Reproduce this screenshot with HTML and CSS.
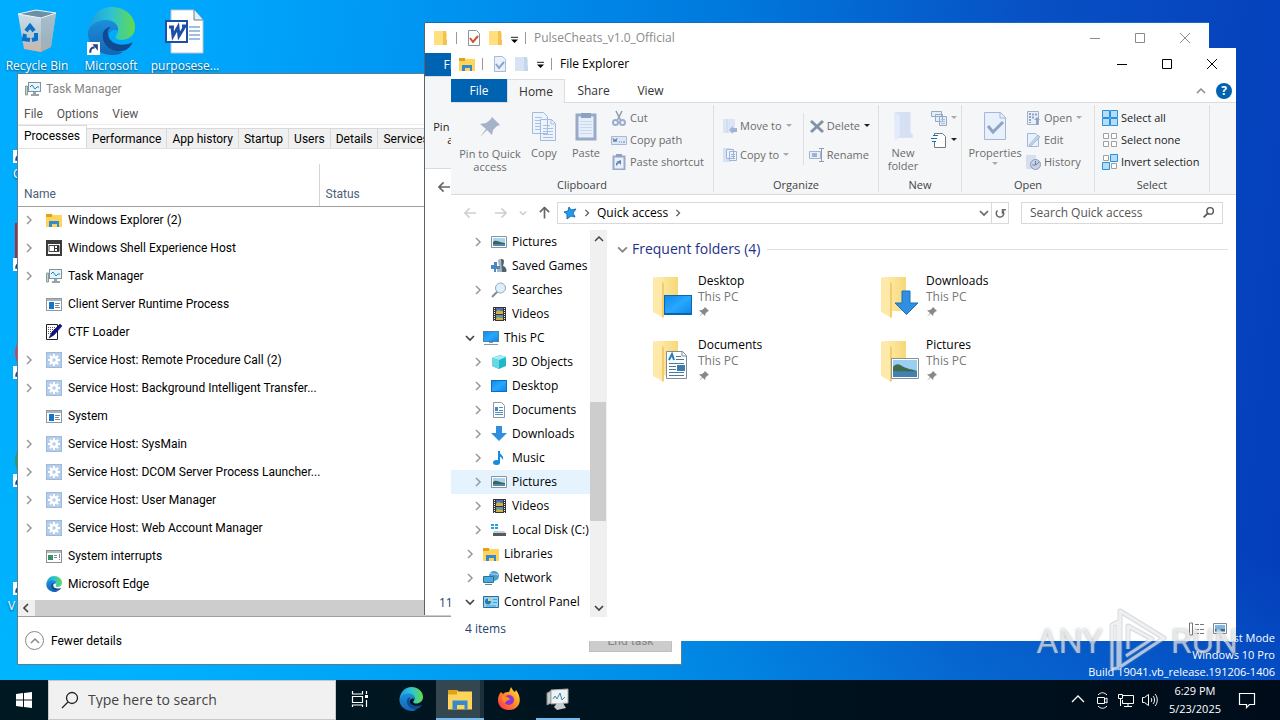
FILE: index.html
```html
<!DOCTYPE html>
<html lang="en">
<head>
<meta charset="utf-8">
<title>Desktop</title>
<link rel="stylesheet" href="styles.css">
</head>
<body>
<svg class="defs" aria-hidden="true">
  <defs>
    <linearGradient id="gEdgeA" x1="0" y1="0" x2="1" y2="0"><stop offset="0" stop-color="#1b9de2"/><stop offset=".5" stop-color="#2fc3d0"/><stop offset="1" stop-color="#62dc4a"/></linearGradient>
    <linearGradient id="gEdgeB" x1="0" y1="0" x2="0" y2="1"><stop offset="0" stop-color="#1b8fdc"/><stop offset="1" stop-color="#1466b4"/></linearGradient>
    <linearGradient id="gBin" x1="0" y1="0" x2="0" y2="1"><stop offset="0" stop-color="#cfdfea"/><stop offset=".7" stop-color="#b3c3ce"/><stop offset="1" stop-color="#d9b49c"/></linearGradient>
    <linearGradient id="gFold" x1="0" y1="0" x2="1" y2="0"><stop offset="0" stop-color="#ffeeb4"/><stop offset="1" stop-color="#f7d877"/></linearGradient>
    <linearGradient id="gScreen" x1="0" y1="0" x2="1" y2="1"><stop offset="0" stop-color="#1287e8"/><stop offset=".5" stop-color="#28a8ff"/><stop offset="1" stop-color="#0d86e8"/></linearGradient>
    <linearGradient id="gFox" x1="1" y1="0" x2="0" y2="1"><stop offset="0" stop-color="#fff34d"/><stop offset=".4" stop-color="#ff9a1f"/><stop offset="1" stop-color="#ff2a55"/></linearGradient>
  </defs>
  <symbol id="edge" viewBox="0 0 48 48">
    <path d="M1 25C2 10 12 0 25 0c13 0 23 9 23 20 0 8-6 13-14 13-5 0-7-3-4-6 3-5 0-12-8-12-9 0-17 4-21 10z" fill="url(#gEdgeA)"/>
    <path d="M1 25c2-8 10-12 18-12 8 0 13 5 12 11-4-3-10 0-10 7 0 9 8 14 15 14-4 3-8 3-12 3C10 47 0 36 1 25z" fill="url(#gEdgeB)"/>
    <path d="M16 26c-2 10 7 20 20 18 4-1 7-4 9-7 1-1 0-2-1-1-10 4-22 1-23-9-1-3 1-6 3-7-4 0-7 3-8 6z" fill="#0f4a92"/>
  </symbol>
  <symbol id="bin" viewBox="0 0 48 48">
    <path d="M5 7l38-1-5 34-10 5-17-3z" fill="url(#gBin)"/>
    <path d="M28 10l15-4-5 34-10 5z" fill="#90a8b6" opacity=".6"/>
    <path d="M5 7l18-4 20 3-15 5z" fill="#6d8fa5" stroke="#edf5fa"/>
    <path d="M13 24l4-5 4 5M23 26v6l-4 1M17 33l-6-1 1-5" fill="none" stroke="#0971c9" stroke-width="4"/>
  </symbol>
  <symbol id="word" viewBox="0 0 40 48">
    <path d="M6 3h23l9 10v33H6z" fill="#fff" stroke="#b9c6cf"/><path d="M29 3v10h9" fill="#e9eef2" stroke="#5c7c94"/>
    <path d="M24 20h11M24 24h11M24 28h11M24 32h11" stroke="#3e80c8"/><rect x="1" y="14" width="21" height="21" fill="#fff" stroke="#1d4fa8" stroke-width="2"/>
    <path d="M4 20h5M7 20l1 9 5-9 1 9 6-10M17 19h4" fill="none" stroke="#1d4fa8" stroke-width="3"/>
  </symbol>
  <symbol id="link" viewBox="0 0 12 12"><path d="M0 0h12v12H0z" fill="#fff"/><path d="M3 10c0-4 1-5 4-5" fill="none" stroke="#1c4389" stroke-width="2"/><path d="M5 2h5v6z" fill="#1c4389"/></symbol>
  <symbol id="exp" viewBox="0 0 16 16"><path d="M0 2h6l1 1h9v12H0z" fill="#ffd45a"/><path d="M0 2h6v3H0z" fill="#e0a11b"/><path d="M3 9h10v6h-2v-3H6v3H3z" fill="#3489cf"/></symbol>
  <symbol id="shell" viewBox="0 0 16 16"><path d="M1 1h14v14H1z" fill="#fff" stroke="#3b3b3b" stroke-width="2"/><path d="M2 2h12v2H2z" fill="#3b3b3b"/><path d="M3 5.500h10v6H3z" fill="none" stroke="#444"/><path d="M8 6h1v5H8zM9 8h3v1H9zM11 6h2v5h-2z" fill="#333"/></symbol>
  <symbol id="tm" viewBox="0 0 16 16"><path d="M.5 5h2v9h-2z" fill="#b9dcc0" stroke="#8d9a9a"/><rect x="3.500" y="1.500" width="12" height="9" fill="#e2f5fd" stroke="#85919b"/><path d="M5 6l2-2 3 4 2-2h2" fill="none" stroke="#2685b8"/><path d="M8 11h3v2h3v2H6v-2h2z" fill="#9aa3a8"/></symbol>
  <symbol id="app" viewBox="0 0 16 16"><rect x=".5" y="2.500" width="15" height="12" fill="#fff" stroke="#8b99a5"/><path d="M1 3h14v2H1z" fill="#a9b6c0"/><path d="M3 6h5v7H3z" fill="#1774c4"/><path d="M9 7.500h5M9 9.500h4M9 11.500h5" stroke="#74899b"/></symbol>
  <symbol id="ctf" viewBox="0 0 16 16"><path d="M.5.500h11v15H.5z" fill="#fff" stroke="#222"/><path d="M2 3.500h8M2 5.500h7M2 7.500h6M2 9.500h4" stroke="#555" stroke-dasharray="1 1"/><path d="M3 14l3-6 8-8 2 2-8 9z" fill="#10109a" stroke="#000" stroke-width=".5"/></symbol>
  <symbol id="gear" viewBox="0 0 16 16"><rect x=".5" y=".5" width="15" height="15" fill="#b3cdea" stroke="#9dbbde"/><circle cx="8" cy="8" r="3" fill="none" stroke="#fff" stroke-width="2.500"/><path d="M8 2v2M8 12v2M2 8h2M12 8h2M3.800 3.800l1.500 1.500M10.700 10.700l1.500 1.500M12.200 3.800l-1.500 1.500M5.300 10.700l-1.500 1.500" stroke="#fff" stroke-width="2"/></symbol>
  <symbol id="sysint" viewBox="0 0 16 16"><rect x=".5" y="2.500" width="15" height="12" fill="#fff" stroke="#8b8f92"/><path d="M1 3h14v2H1z" fill="#b5babd"/><path d="M2 7h5v5H2z" fill="#3a8f6c"/><path d="M8 7.500h3M8 9.500h3M13.500 6v4M13.500 11v1" stroke="#789"/></symbol>
  <symbol id="r" viewBox="0 0 10 10"><path d="M3 1l4 4-4 4" fill="none" stroke="currentColor" stroke-width="1.500"/></symbol>
  <symbol id="d" viewBox="0 0 10 10"><path d="M1 3l4 4 4-4" fill="none" stroke="currentColor" stroke-width="1.700"/></symbol>
  <symbol id="u" viewBox="0 0 10 10"><path d="M1 7l4-4 4 4" fill="none" stroke="currentColor" stroke-width="1.500"/></symbol>
  <symbol id="l" viewBox="0 0 10 10"><path d="M7 1L3 5l4 4" fill="none" stroke="currentColor" stroke-width="1.700"/></symbol>
  <symbol id="tri" viewBox="0 0 6 6"><path d="M0 1h6L3 4z" fill="currentColor"/></symbol>
  <symbol id="qat" viewBox="0 0 8 8"><path d="M0 1.500h8" stroke="currentColor"/><path d="M0 4h8L4 8z" fill="currentColor"/></symbol>
  <symbol id="min" viewBox="0 0 12 12"><path d="M1 6.500h10" stroke="currentColor"/></symbol>
  <symbol id="max" viewBox="0 0 12 12"><path d="M1.500 1.500h9v9h-9z" fill="none" stroke="currentColor"/></symbol>
  <symbol id="x" viewBox="0 0 12 12"><path d="M1 1l10 10M11 1L1 11" stroke="currentColor"/></symbol>
  <symbol id="fold" viewBox="0 0 16 16"><path d="M1 1h9l4 2v12H1z" fill="#ffdf7e"/><path d="M10 1h3v9h1v5h-4z" fill="#f1c451"/></symbol>
  <symbol id="foldg" viewBox="0 0 16 16"><path d="M1 1h9l4 2v12H1z" fill="#d8e3f5"/><path d="M10 1h3v9h1v5h-4z" fill="#c6d5ec"/></symbol>
  <symbol id="chk" viewBox="0 0 16 16"><path d="M2.500.500h8l3 3v12h-11z" fill="#fff" stroke="#8994a2"/><path d="M4 8l3 4 5-6" fill="none" stroke="#cf5425" stroke-width="2"/></symbol>
  <symbol id="chkg" viewBox="0 0 16 16"><path d="M2.500.500h8l3 3v12h-11z" fill="#e9f1fc" stroke="#a8bbd6"/><path d="M4 8l3 4 5-6" fill="none" stroke="#8ba4ca" stroke-width="2"/></symbol>
  <symbol id="pin" viewBox="0 0 24 24"><path d="M14 2l8 8-3 1-4 4-1 5-5-5-7 7 6-8-6-5 6-1 4-3z" fill="currentColor"/></symbol>
  <symbol id="copy" viewBox="0 0 26 30"><path d="M1.500 1.500h11l4 4v17h-15zM9.500 8.500h11l4 4v17h-15z" fill="#edf4fd" stroke="#a5b9da"/><path d="M20 8v5h5M4 6.500h7M4 9.500h5M4 12.500h5M4 15.500h5M4 18.500h5M12 14.500h7M12 17.500h10M12 20.500h10M12 23.500h10M12 26.500h10" fill="none" stroke="#a9bfdf"/></symbol>
  <symbol id="paste" viewBox="0 0 22 30"><path d="M2 4h18v24H2z" fill="#e7effb" stroke="#98aac8" stroke-width="3"/><path d="M6 2h10v5H6z" fill="#8ea1c1"/><path d="M5 10.500h12M5 13.500h12M5 16.500h12M5 19.500h12M5 22.500h12" stroke="#cad7ee"/></symbol>
  <symbol id="cut" viewBox="0 0 16 16"><path d="M5 1l5 10M11 1L6 11" stroke="#8f9bb0" stroke-width="1.500"/><circle cx="4.500" cy="12.500" r="2.500" fill="none" stroke="#9baece" stroke-width="2"/><circle cx="11.500" cy="12.500" r="2.500" fill="none" stroke="#9baece" stroke-width="2"/></symbol>
  <symbol id="cpath" viewBox="0 0 16 16"><path d="M.5 4.500h15v8H.5z" fill="#dce7f8" stroke="#a9b9d4"/><path d="M2 6l1 4 1-3 1 3 1-4M8 10h1M10 10h1M12 10h2" fill="none" stroke="#7085ac"/></symbol>
  <symbol id="pshort" viewBox="0 0 16 16"><path d="M2.500 2.500h11v13h-11z" fill="#e8f0fc" stroke="#98aac8" stroke-width="2"/><path d="M5 0h6v3H5z" fill="#8ea1c1"/><path d="M5 12V9l2-1H5l5-2v5L8 9z" fill="#6683b6"/></symbol>
  <symbol id="move" viewBox="0 0 16 16"><path d="M1 1h12v14H1z" fill="#dbe5f6"/><path d="M5 1v14" stroke="#c7d6ee"/><path d="M7 12l4-4v2h4v4h-4v2z" fill="#a1b4d4"/></symbol>
  <symbol id="cto" viewBox="0 0 16 16"><path d="M1 1h8v14H1z" fill="#d6e2f5"/><path d="M4.500 2.500h7v9h-7zM7.500 4.500h7v9h-7z" fill="#edf4fd" stroke="#9eb4d7"/><path d="M9 7.500h4M9 9.500h4M9 11.500h4" stroke="#9eb4d7"/></symbol>
  <symbol id="del" viewBox="0 0 16 16"><path d="M2 3l12 11M14 3L2 14" stroke="#8492a8" stroke-width="3"/></symbol>
  <symbol id="ren" viewBox="0 0 16 16"><path d="M.5 4.500h11v7H.5z" fill="#e7effb" stroke="#a2b2cf"/><path d="M3 6h5v4H3z" fill="#9fb2d3"/><path d="M10 1.500h5M12.500 2v12M10 14.500h5" stroke="#8c9cb8"/></symbol>
  <symbol id="nfold" viewBox="0 0 20 28"><path d="M2 1h15v19l2 2v3H5l-2 2z" fill="#d5e0f2"/><path d="M2 1l5 3v19l-4 4-1-2z" fill="#e2ebf9"/></symbol>
  <symbol id="nitem" viewBox="0 0 16 16"><path d="M.5 1.500h10v5H.5zM4.500 4.500h7v7h-7zM8.500 6.500h7v9h-7z" fill="#e4edfa" stroke="#96a8c4"/><path d="M10 9.500h4M10 11.500h4M10 13.500h4" stroke="#a9bcd9"/></symbol>
  <symbol id="easy" viewBox="0 0 16 16"><path d="M3.500 1.500h8l3 3v11h-11z" fill="#fff" stroke="#707a85"/><path d="M2 3h6v6H2z" fill="#fff"/><path d="M2 3.500h5M0 6.500h6M1 9.500h4" stroke="#1d6eb8"/></symbol>
  <symbol id="prop" viewBox="0 0 24 30"><path d="M1.500 1.500h16l5 5v22h-21z" fill="#e8f0fc" stroke="#a3b7d8"/><path d="M17 1v6h6" fill="none" stroke="#a3b7d8"/><path d="M5 15l5 6 10-10" fill="none" stroke="#8fa3c5" stroke-width="3"/></symbol>
  <symbol id="open" viewBox="0 0 16 16"><path d="M2.500 1.500h11v13h-11z" fill="#e8effb" stroke="#9eafca"/><path d="M5 3v10M7 4.500h5M7 7.500h3" stroke="#8da2c6" stroke-width="2" stroke-dasharray="2 1"/><path d="M9 10l3-3 3 3h-2v5h-2v-5z" fill="#8fa1c1"/></symbol>
  <symbol id="edit" viewBox="0 0 16 16"><path d="M2.500 1.500h8l3 3v10h-11z" fill="#e8f0fc" stroke="#a3b7d8"/><path d="M4 13l9-10 2 2-9 9z" fill="#c3d2eb" stroke="#9bb0d2" stroke-width=".7"/></symbol>
  <symbol id="hist" viewBox="0 0 16 16"><path d="M1 1h10v14H1z" fill="#d5dff0"/><circle cx="10.500" cy="10.500" r="5" fill="#c6d1e4" stroke="#8c9cb8"/><path d="M10.500 7v4h-3M11 11l3-3" fill="none" stroke="#6f80a0"/></symbol>
  <symbol id="sall" viewBox="0 0 16 16"><path d="M.5.500h7v7h-7zM8.500.500h7v7h-7zM.5 8.500h7v7h-7zM8.500 8.500h7v7h-7z" fill="#b5dcf8" stroke="#2c8fdd"/></symbol>
  <symbol id="snone" viewBox="0 0 16 16"><path d="M1.500 1.500h5v5h-5zM9.500 1.500h5v5h-5zM1.500 9.500h5v5h-5zM9.500 9.500h5v5h-5z" fill="#fff" stroke="#a0a0a0"/></symbol>
  <symbol id="sinv" viewBox="0 0 16 16"><path d="M1.500 1.500h5v5h-5zM9.500 9.500h5v5h-5z" fill="#fff" stroke="#a0a0a0"/><path d="M8.500.500h7v7h-7zM.5 8.500h7v7h-7z" fill="#b5dcf8" stroke="#2c8fdd"/></symbol>
  <symbol id="arrow" viewBox="0 0 14 12"><path d="M13 6H2M6 1L1 6l5 5" fill="none" stroke="currentColor" stroke-width="1.800"/></symbol>
  <symbol id="star" viewBox="0 0 16 16"><path d="M7 2l2 3 5-1-3 4 2 4-4-1-4 3v-5L2 7l4-1z" fill="#2797e8" stroke="#1374c6"/></symbol>
  <symbol id="mag" viewBox="0 0 16 16"><circle cx="10" cy="6" r="4" fill="none" stroke="currentColor" stroke-width="1.700"/><path d="M7 9l-5 5" stroke="currentColor" stroke-width="2"/></symbol>
  <symbol id="pic" viewBox="0 0 16 16"><path d="M.5 2.500h15v11H.5z" fill="#fff" stroke="#8b9299"/><path d="M2 4h12v8H2z" fill="#a9d5f3"/><path d="M2 8c3-3 5 0 12 1v1H2z" fill="#3b6557"/><path d="M2 10h12v2H2z" fill="#4f88b3"/></symbol>
  <symbol id="games" viewBox="0 0 16 16"><path d="M7 3c0-3 6-3 6 0l-1 5c3 1 4 4 3 6H6c0-3 0-5 2-6z" fill="#a8b6bf"/><path d="M10 1c4 0 3 3 2 7 3 1 4 4 3 6h-4z" fill="#52626d"/><path d="M0 7h3V4h3v4h3v3H5v3H3v-3H0z" fill="#4c88bd"/></symbol>
  <symbol id="search" viewBox="0 0 16 16"><path d="M7 9l-6 6" stroke="#7c8c99" stroke-width="2"/><circle cx="9.500" cy="6" r="5" fill="#dbf0fc" stroke="#93a9b9"/></symbol>
  <symbol id="vid" viewBox="0 0 16 16"><path d="M2 1h13v14H2z" fill="#343434"/><path d="M5 2h7v6H5z" fill="#4f6dc2"/><path d="M5 9h7v5H5z" fill="#5d90bc"/><path d="M5 6c3-4 4 0 7-1v3H5zM5 13c3-4 5 0 7-1v2H5z" fill="#d7b12f"/><path d="M3.500 2v13M13.500 2v13" stroke="#eee" stroke-dasharray="1 1"/></symbol>
  <symbol id="pc" viewBox="0 0 16 16"><rect x=".5" y="1.500" width="15" height="10" fill="url(#gScreen)" stroke="#53809f"/><path d="M1 14.500h14M6 12.500h4" stroke="#8099a9"/></symbol>
  <symbol id="obj" viewBox="0 0 16 16"><path d="M1 4l8-3 6 2v9l-7 3-7-3z" fill="#22b8cb"/><path d="M1 4l7 2v9l-7-3z" fill="#69d8e1"/><path d="M1 4l8-3 6 2-7 3z" fill="#a3edf1"/></symbol>
  <symbol id="desk" viewBox="0 0 16 16"><rect x=".5" y="2.500" width="15" height="11" fill="url(#gScreen)" stroke="#096fbd"/></symbol>
  <symbol id="doc" viewBox="0 0 16 16"><path d="M2.500.500h8l3 3v12h-11z" fill="#fff" stroke="#8798a6"/><path d="M4 5h3v4H4z" fill="#4189c6"/><path d="M8 5.500h4M8 8.500h4M4 10.500h8M4 12.500h8" stroke="#578eb9"/></symbol>
  <symbol id="down" viewBox="0 0 16 16"><path d="M5 0h6v7h5l-8 8-8-8h5z" fill="#318ddd"/></symbol>
  <symbol id="music" viewBox="0 0 16 16"><path d="M8 1v11" stroke="#168be0" stroke-width="2"/><path d="M8 1c1 4 5 4 4 9-1-2-2-3-4-4z" fill="#168be0"/><ellipse cx="5.500" cy="12.500" rx="3.500" ry="2.500" fill="#168be0"/></symbol>
  <symbol id="disk" viewBox="0 0 16 16"><path d="M0 2h3v2H0zM4 2h3v2H4zM0 5h3v2H0zM4 5h3v2H4z" fill="#21a4e4"/><path d="M3 9h10l2 2H2z" fill="#c8ced1"/><path d="M2 11h13v3H2z" fill="#555c61"/></symbol>
  <symbol id="net" viewBox="0 0 16 16"><circle cx="11" cy="6" r="5" fill="#4f9fcc"/><path d="M7 3c2 2 5 0 8 2" stroke="#b7dfef" fill="none"/><path d="M.5 6.500h10v6H.5z" fill="#44ace8" stroke="#396f91"/><path d="M2 14.500h7" stroke="#60869e"/></symbol>
  <symbol id="cp" viewBox="0 0 16 16"><path d="M.5 2.500h15v11H.5z" fill="#92d6f6" stroke="#286da0"/><circle cx="5" cy="7.500" r="3" fill="#2876b5"/><path d="M5 7V4c2 0 3 1 3 3z" fill="#f5d163"/><path d="M10 5.500h4M10 8.500h4M3 12h10" stroke="#4b9fd6"/></symbol>
  <symbol id="bigfold" viewBox="0 0 40 44"><path d="M3 2h23v34H9z" fill="url(#gFold)"/><path d="M1 2l9 5v35L1 37z" fill="#ffe9a8"/><path d="M10 7l2 1v34l-2 1z" fill="#f3cd6b"/></symbol>
</svg>

<div class="screen">
<main class="desktop">
  <div class="ray"></div>
  <div class="shortcuts">
    <div class="shortcut"><svg class="big"><use href="#bin"/></svg><span>Recycle Bin</span></div>
    <div class="shortcut"><svg class="big"><use href="#edge"/></svg><svg class="link"><use href="#link"/></svg><span>Microsoft</span></div>
    <div class="shortcut"><svg class="big"><use href="#word"/></svg><span>purposese...</span></div>
    <div class="shortcut first"><i class="big"></i><svg class="link"><use href="#link"/></svg><span class="part">C</span></div>
    <div class="shortcut first"><i class="big tile red"></i><svg class="link"><use href="#link"/></svg></div>
    <div class="shortcut first"><i class="big disc pink"></i><svg class="link"><use href="#link"/></svg></div>
    <div class="shortcut first"><i class="big disc green"></i><svg class="link"><use href="#link"/></svg></div>
    <div class="shortcut first"><i class="big"></i><svg class="link"><use href="#link"/></svg><span class="part wide">V</span></div>
  </div>

  <section class="window task-manager">
    <header class="tm-title"><svg class="i16"><use href="#tm"/></svg>Task Manager</header>
    <nav class="tm-menu"><button>File</button><button>Options</button><button>View</button></nav>
    <div class="tm-tabs"><button class="on">Processes</button><button>Performance</button><button>App history</button><button>Startup</button><button>Users</button><button>Details</button><button>Services</button></div>
    <table class="procs">
      <thead><tr><th class="name">Name</th><th>Status</th></tr></thead>
      <tbody>
        <tr><td><div><svg class="chev"><use href="#r"/></svg><svg class="i16"><use href="#exp"/></svg>Windows Explorer (2)</div></td><td></td></tr>
        <tr><td><div><svg class="chev"><use href="#r"/></svg><svg class="i16"><use href="#shell"/></svg>Windows Shell Experience Host</div></td><td></td></tr>
        <tr><td><div><svg class="chev"><use href="#r"/></svg><svg class="i16"><use href="#tm"/></svg>Task Manager</div></td><td></td></tr>
        <tr><td><div><i class="chev"></i><svg class="i16"><use href="#app"/></svg>Client Server Runtime Process</div></td><td></td></tr>
        <tr><td><div><i class="chev"></i><svg class="i16"><use href="#ctf"/></svg>CTF Loader</div></td><td></td></tr>
        <tr><td><div><svg class="chev"><use href="#r"/></svg><svg class="i16"><use href="#gear"/></svg>Service Host: Remote Procedure Call (2)</div></td><td></td></tr>
        <tr><td><div><svg class="chev"><use href="#r"/></svg><svg class="i16"><use href="#gear"/></svg>Service Host: Background Intelligent Transfer...</div></td><td></td></tr>
        <tr><td><div><i class="chev"></i><svg class="i16"><use href="#app"/></svg>System</div></td><td></td></tr>
        <tr><td><div><svg class="chev"><use href="#r"/></svg><svg class="i16"><use href="#gear"/></svg>Service Host: SysMain</div></td><td></td></tr>
        <tr><td><div><svg class="chev"><use href="#r"/></svg><svg class="i16"><use href="#gear"/></svg>Service Host: DCOM Server Process Launcher...</div></td><td></td></tr>
        <tr><td><div><svg class="chev"><use href="#r"/></svg><svg class="i16"><use href="#gear"/></svg>Service Host: User Manager</div></td><td></td></tr>
        <tr><td><div><svg class="chev"><use href="#r"/></svg><svg class="i16"><use href="#gear"/></svg>Service Host: Web Account Manager</div></td><td></td></tr>
        <tr><td><div><i class="chev"></i><svg class="i16"><use href="#sysint"/></svg>System interrupts</div></td><td></td></tr>
        <tr><td><div><i class="chev"></i><svg class="i16"><use href="#edge"/></svg>Microsoft Edge</div></td><td></td></tr>
      </tbody>
    </table>
    <div class="hscroll"><svg class="i10"><use href="#l"/></svg><i></i></div>
    <footer class="tm-foot"><button class="fewer"><span class="ring"><svg class="i10"><use href="#u"/></svg></span>Fewer details</button><button class="end">End task</button></footer>
  </section>

  <section class="window explorer behind">
    <header class="ex-title"><svg class="i16"><use href="#fold"/></svg><i class="bar"></i><svg class="i16"><use href="#chk"/></svg><svg class="i16 q2"><use href="#fold"/></svg><svg class="qat"><use href="#qat"/></svg><i class="bar"></i><span>PulseCheats_v1.0_Official</span>
      <div class="controls"><button aria-label="Minimize"><svg><use href="#min"/></svg></button><button aria-label="Maximize"><svg><use href="#max"/></svg></button><button aria-label="Close"><svg><use href="#x"/></svg></button></div></header>
    <div class="ex-tabs"><button class="file">File</button></div>
    <div class="ribbon"><div class="group clip"><div class="tools"><button class="tool pin-tool"><svg></svg>Pin to Quick<br>access</button></div></div></div>
    <div class="address-row"><svg class="arrow dark"><use href="#arrow"/></svg></div>
    <div class="ex-body"></div>
    <footer class="status">11 items</footer>
  </section>

  <section class="window explorer front">
    <header class="ex-title"><svg class="i16"><use href="#exp"/></svg><i class="bar"></i><svg class="i16"><use href="#chkg"/></svg><svg class="i16 q2"><use href="#foldg"/></svg><svg class="qat"><use href="#qat"/></svg><i class="bar"></i><span>File Explorer</span>
      <div class="controls"><button aria-label="Minimize"><svg><use href="#min"/></svg></button><button aria-label="Maximize"><svg><use href="#max"/></svg></button><button aria-label="Close"><svg><use href="#x"/></svg></button></div></header>
    <div class="ex-tabs"><button class="file">File</button><button class="on">Home</button><button>Share</button><button>View</button><span class="tab-end"><svg class="i10"><use href="#u"/></svg><button class="help">?</button></span></div>
    <div class="ribbon">
      <div class="group clip"><div class="tools">
        <button class="tool pin-tool"><svg class="pin"><use href="#pin"/></svg>Pin to Quick<br>access</button>
        <button class="tool copy"><svg><use href="#copy"/></svg>Copy</button>
        <button class="tool copy"><svg><use href="#paste"/></svg>Paste</button>
        <div class="stack"><button><svg class="i16"><use href="#cut"/></svg>Cut</button><button><svg class="i16"><use href="#cpath"/></svg>Copy path</button><button><svg class="i16"><use href="#pshort"/></svg>Paste shortcut</button></div>
      </div><span class="label">Clipboard</span></div>
      <div class="group org"><div class="tools">
        <div class="stack loose"><button><svg class="i16"><use href="#move"/></svg>Move to<svg class="tri"><use href="#tri"/></svg></button><button><svg class="i16"><use href="#cto"/></svg>Copy to<svg class="tri"><use href="#tri"/></svg></button></div>
        <div class="stack loose ruled"><button><svg class="i16"><use href="#del"/></svg>Delete<svg class="tri black"><use href="#tri"/></svg></button><button><svg class="i16"><use href="#ren"/></svg>Rename</button></div>
      </div><span class="label">Organize</span></div>
      <div class="group new"><div class="tools">
        <button class="tool"><svg><use href="#nfold"/></svg>New<br>folder</button>
        <div class="stack"><button aria-label="New item"><svg class="i16"><use href="#nitem"/></svg><svg class="tri"><use href="#tri"/></svg></button><button aria-label="Easy access"><svg class="i16"><use href="#easy"/></svg><svg class="tri black"><use href="#tri"/></svg></button></div>
      </div><span class="label">New</span></div>
      <div class="group opn"><div class="tools">
        <button class="tool"><svg><use href="#prop"/></svg>Properties<svg class="tri"><use href="#tri"/></svg></button>
        <div class="stack"><button><svg class="i16"><use href="#open"/></svg>Open<svg class="tri"><use href="#tri"/></svg></button><button><svg class="i16"><use href="#edit"/></svg>Edit</button><button><svg class="i16"><use href="#hist"/></svg>History</button></div>
      </div><span class="label">Open</span></div>
      <div class="group sel"><div class="tools">
        <div class="stack on"><button><svg class="i16"><use href="#sall"/></svg>Select all</button><button><svg class="i16"><use href="#snone"/></svg>Select none</button><button><svg class="i16"><use href="#sinv"/></svg>Invert selection</button></div>
      </div><span class="label">Select</span></div>
    </div>
    <div class="address-row">
      <svg class="arrow"><use href="#arrow"/></svg><svg class="arrow fwd"><use href="#arrow"/></svg><svg class="tri"><use href="#d"/></svg><svg class="arrow up dark"><use href="#arrow"/></svg>
      <div class="address"><svg class="i16"><use href="#star"/></svg><svg class="crumb"><use href="#r"/></svg><span>Quick access</span><svg class="crumb"><use href="#r"/></svg><svg class="i10 drop"><use href="#d"/></svg><button class="refresh" aria-label="Refresh"><svg viewBox="0 0 12 12"><path d="M3 3a4.500 4.500 0 1 0 6 0M9 7V2h4" fill="none" stroke="currentColor" stroke-width="1.800"/></svg></button></div>
      <div class="find"><input type="text" aria-label="Search Quick access" placeholder="Search Quick access"><svg><use href="#mag"/></svg></div>
    </div>
    <div class="ex-body">
      <ul class="tree">
        <li class="sub"><svg class="chev"><use href="#r"/></svg><svg class="i16"><use href="#pic"/></svg>Pictures</li>
        <li class="sub"><i class="chev"></i><svg class="i16"><use href="#games"/></svg>Saved Games</li>
        <li class="sub"><svg class="chev"><use href="#r"/></svg><svg class="i16"><use href="#search"/></svg>Searches</li>
        <li class="sub"><i class="chev"></i><svg class="i16"><use href="#vid"/></svg>Videos</li>
        <li><svg class="chev open"><use href="#d"/></svg><svg class="i16"><use href="#pc"/></svg>This PC</li>
        <li class="sub"><svg class="chev"><use href="#r"/></svg><svg class="i16"><use href="#obj"/></svg>3D Objects</li>
        <li class="sub"><svg class="chev"><use href="#r"/></svg><svg class="i16"><use href="#desk"/></svg>Desktop</li>
        <li class="sub"><svg class="chev"><use href="#r"/></svg><svg class="i16"><use href="#doc"/></svg>Documents</li>
        <li class="sub"><svg class="chev"><use href="#r"/></svg><svg class="i16"><use href="#down"/></svg>Downloads</li>
        <li class="sub"><svg class="chev"><use href="#r"/></svg><svg class="i16"><use href="#music"/></svg>Music</li>
        <li class="sub hot"><svg class="chev"><use href="#r"/></svg><svg class="i16"><use href="#pic"/></svg>Pictures</li>
        <li class="sub"><svg class="chev"><use href="#r"/></svg><svg class="i16"><use href="#vid"/></svg>Videos</li>
        <li class="sub"><svg class="chev"><use href="#r"/></svg><svg class="i16"><use href="#disk"/></svg>Local Disk (C:)</li>
        <li><svg class="chev"><use href="#r"/></svg><svg class="i16"><use href="#exp"/></svg>Libraries</li>
        <li><svg class="chev"><use href="#r"/></svg><svg class="i16"><use href="#net"/></svg>Network</li>
        <li><svg class="chev open"><use href="#d"/></svg><svg class="i16"><use href="#cp"/></svg>Control Panel</li>
      </ul>
      <div class="vscroll"><svg class="i10"><use href="#u"/></svg><div class="track"><i></i></div><svg class="i10"><use href="#d"/></svg></div>
      <div class="content">
        <h2><svg><use href="#d"/></svg>Frequent folders (4)</h2>
        <div class="tiles">
          <div class="tile-item"><svg class="folder" viewBox="0 0 44 44"><use href="#bigfold" width="40" height="44"/><rect x="12.500" y="20.500" width="27" height="19" fill="url(#gScreen)" stroke="#0968b0"/><path d="M13 38.500h26" stroke="#0b5fa6"/></svg><div><b>Desktop</b><span>This PC</span><svg class="tack"><use href="#pin"/></svg></div></div>
          <div class="tile-item"><svg class="folder" viewBox="0 0 44 44"><use href="#bigfold" width="40" height="44"/><path d="M22 16h8v12h8L26.500 39.500 15 28h7z" fill="#318fe2" stroke="#1a6fbe"/></svg><div><b>Downloads</b><span>This PC</span><svg class="tack"><use href="#pin"/></svg></div></div>
          <div class="tile-item"><svg class="folder" viewBox="0 0 44 44"><use href="#bigfold" width="40" height="44"/><path d="M14.500 12.500h16l4 4v23h-20z" fill="#fff" stroke="#7f8b96"/><path d="M30 12v5h5" fill="none" stroke="#7f8b96"/><path d="M17 21l3-6 2 6" fill="none" stroke="#207ec0" stroke-width="2"/><path d="M24 17.500h5M24 20.500h8M17 24.500h15M17 27.500h7M17 30.500h7M17 33.500h15M17 36.500h15" stroke="#4a7a9e"/><path d="M25 26h8v6h-8z" fill="#3c7cad"/></svg><div><b>Documents</b><span>This PC</span><svg class="tack"><use href="#pin"/></svg></div></div>
          <div class="tile-item"><svg class="folder" viewBox="0 0 44 44"><use href="#bigfold" width="40" height="44"/><path d="M11.500 19.500h27v20h-27z" fill="#fff" stroke="#889199"/><path d="M13 21h24v17H13z" fill="#9bcff2"/><path d="M13 28c3-4 6-3 9-1 5 3 9 3 15 5v1H13z" fill="#3f6a4d"/><path d="M13 32c8 0 16 1 24 0v6H13z" fill="#4381b2"/></svg><div><b>Pictures</b><span>This PC</span><svg class="tack"><use href="#pin"/></svg></div></div>
        </div>
      </div>
    </div>
    <footer class="status">4 items<span class="views"><svg viewBox="0 0 16 14"><path d="M.5 1v12h3V1zM6 2.500h4M11 2.500h4M6 7.500h4M11 7.500h4M6 11.500h4M11 11.500h4" fill="none" stroke="#777"/></svg><svg viewBox="0 0 16 14"><path d="M1.500 1.500h13v10h-13z" fill="#fff" stroke="#888"/><path d="M3 3h10v7H3z" fill="#79b9e8"/><path d="M3 7h10v2H3z" fill="#456b85"/></svg></span></footer>
  </section>

  <p class="build">Test Mode<br>Windows 10 Pro<br>Build 19041.vb_release.191206-1406</p>
  <div class="mark"><span>ANY</span><svg viewBox="0 0 60 64"><path d="M5 60V16l6-3v46zM13 58V2l44 27-44 29M21 40V17l24 13-26 17" fill="none" stroke="#8c96a0" stroke-opacity=".35" stroke-width="5" stroke-linejoin="round"/><path d="M5 60V16l6-3v46zM13 58V2l44 27-44 29M21 40V17l24 13-26 17" fill="none" stroke="#fff" stroke-opacity=".6" stroke-width="3" stroke-linejoin="round"/></svg><span>RUN</span></div>
</main>

<footer class="taskbar">
  <button class="start" aria-label="Start"><svg viewBox="0 0 16 16"><path d="M0 2l7-1v6.500H0zM8 1l8-1v7.500H8zM0 8.500h7V15l-7-1zM8 8.500h8V16l-8-1z" fill="#fff"/></svg></button>
  <label class="task-search"><svg viewBox="0 0 18 18"><circle cx="11" cy="7" r="5.500" fill="none" stroke="#222" stroke-width="1.300"/><path d="M7 11l-6 6" stroke="#222" stroke-width="1.300"/></svg><input type="text" aria-label="Search" placeholder="Type here to search"></label>
  <button class="tb task-view" aria-label="Task view"><svg viewBox="0 0 18 18"><path d="M1.500 1v3h10V1M1.500 6.500h10v6h-10zM1.500 17v-2h10v2M15.500 1v3M15.500 10v7" fill="none" stroke="#fff" stroke-width="1.200"/><path d="M14 5h3v3h-3z" fill="#fff"/></svg></button>
  <button class="tb" aria-label="Edge"><svg><use href="#edge"/></svg></button>
  <button class="tb active" aria-label="File Explorer"><svg><use href="#exp"/></svg></button>
  <button class="tb" aria-label="Firefox"><svg viewBox="0 0 24 24"><path d="M4 5l2 2c2-2 4-2 6-2l2-5c2 3 2 4 4 5l1-2c7 9 4 20-7 20C1 23-2 12 4 5z" fill="url(#gFox)"/><circle cx="12" cy="13" r="5" fill="#8b35d6"/><path d="M5 9c4 0 7 1 8 4-3 0-4 1-5 3-2-1-4-3-3-7z" fill="#ff8b22"/></svg></button>
  <button class="tb running" aria-label="Task Manager"><svg viewBox="0 0 24 24"><path d="M1 6l4-2v12l-4 2z" fill="#c9cccd" stroke="#888"/><path d="M5 3l17-1v14L5 17z" fill="#eef2f3" stroke="#a2a9ad"/><path d="M7 12l2-3 2 3 3-6 2 7 3-3" fill="none" stroke="#3a8ca8"/><path d="M11 16h6l3 5-9 2-3-3z" fill="#c7cccf"/></svg></button>
  <div class="tray">
    <svg viewBox="0 0 16 16"><path d="M2 10l6-6 6 6" fill="none" stroke="#fff" stroke-width="1.300"/></svg>
    <svg viewBox="0 0 16 16"><path d="M3.500 5.500h7v6h-7zM11 7l2-1v5l-2-1M4 3c3-3 6-3 9 0M4 14c3 3 6 3 9 0" fill="none" stroke="#fff"/></svg>
    <svg viewBox="0 0 16 16"><path d="M5 3.500h10.500v8h-11V8M10 12v3M6 14.500h8M.5 2.500h4v4h-4zM2.500 7v7" fill="none" stroke="#fff"/></svg>
    <svg viewBox="0 0 16 16"><path d="M.5 5.500h2l4-3v11l-4-3h-2zM9 6c1 1 1 3 0 4M11 4c2 2 2 6 0 8M13 2c3 3 3 9 0 12" fill="none" stroke="#fff"/></svg>
    <time>6:29 PM<br>5/23/2025</time>
    <svg class="note" viewBox="0 0 18 18"><path d="M1.500 2.500h15v11h-5l-3 3v-3h-7z" fill="none" stroke="#fff" stroke-width="1.200"/></svg>
  </div>
</footer>
</div>
</body>
</html>
```
FILE: styles.css
```css
* { box-sizing: border-box; }
body { margin: 0; font: 12px/16px "Open Sans", "Noto Sans", sans-serif; color: #000; }
button, input { font: inherit; color: inherit; border: 0; background: none; padding: 0; margin: 0; }
svg { display: block; flex: none; overflow: visible; }
.defs { position: absolute; width: 0; height: 0; }
.i16 { width: 16px; height: 16px; }
.i10 { width: 10px; height: 10px; }
.screen { display: flex; flex-direction: column; height: 100vh; min-height: 720px; overflow: hidden; white-space: nowrap; }

/* desktop */
.desktop { flex: 1; position: relative; overflow: hidden; background: linear-gradient(97deg, #00aeff 0%, #00a6fb 16%, #0090ee 36%, #0078dc 54%, #0850c4 76%, #043dba 100%); }
.ray { position: absolute; inset: 0; background: linear-gradient(15deg, rgba(0, 190, 255, .5), rgba(0, 160, 255, 0) 45%); }
.shortcuts { position: relative; display: grid; grid-template-columns: repeat(3, 74px); grid-auto-rows: 108px; color: #fff; }
.shortcut { position: relative; display: flex; flex-direction: column; align-items: center; padding-top: 7px; gap: 3px; text-shadow: 0 1px 2px rgba(0, 0, 0, .6); }
.shortcut .big { width: 48px; height: 48px; }
.shortcut .link { position: absolute; left: 13px; top: 42px; width: 13px; height: 13px; }
.shortcut .tile, .shortcut .disc { width: 44px; height: 44px; }
.first { grid-column: 1; }
.part { align-self: flex-start; margin-left: 13px; }
.part.wide { margin-left: 8px; }
.tile.red { background: #b8262b; }
.disc { border-radius: 50%; }
.disc.pink { background: #e83a4e; }
.disc.green { background: #2f9e50; }

.window { position: absolute; display: flex; flex-direction: column; background: #fff; }

/* task manager */
.task-manager { z-index: 1; left: 17px; top: 73px; width: 665px; height: 592px; border: 1px solid #5f7d90; font-family: "Roboto", "Open Sans", sans-serif; }
.tm-title { display: flex; align-items: center; gap: 5px; height: 30px; padding-left: 7px; color: #858585; }
.tm-menu { display: flex; gap: 14px; height: 21px; padding-left: 6px; color: #555; border-bottom: 1px solid #ececec; }
.tm-tabs { display: flex; align-items: flex-end; height: 24px; border-bottom: 1px solid #e2e2e2; }
.tm-tabs button { height: 20px; padding: 0 5px; background: #f0f0f0; border: solid #d9d9d9; border-width: 1px 1px 0 0; }
.tm-tabs .on { height: 23px; padding: 0 6px 3px; background: #fff; }
.procs { margin-top: 15px; border-collapse: collapse; table-layout: fixed; width: 100%; }
.procs th { height: 42px; padding: 0 6px 4px; vertical-align: bottom; text-align: left; font-weight: 400; color: #4c607a; border-bottom: 1px solid #a0a0a0; }
.procs .name { width: 301px; border-right: 1px solid #d5d5d5; }
.procs td { height: 28px; padding: 0; }
.procs td div { display: flex; align-items: center; gap: 6px; padding-left: 6px; }
.procs .chev { margin-right: 6px; }
.chev { width: 10px; height: 10px; color: #999; flex: none; }
.hscroll { display: flex; align-items: center; height: 16px; margin-top: 2px; background: #f0f0f0; padding-left: 3px; gap: 4px; color: #444; }
.hscroll i { flex: 1; height: 16px; background: #cdcdcd; }
.tm-foot { flex: 1; display: flex; align-items: center; justify-content: space-between; border-top: 1px solid #a0a0a0; padding: 0 9px 0 7px; }
.fewer { display: flex; align-items: center; gap: 7px; }
.ring { display: grid; place-items: center; width: 19px; height: 19px; border: 1px solid #888; border-radius: 50%; color: #888; }
.end { width: 83px; height: 22px; background: #ccc; border: 1px solid #bfbfbf; color: #838383; }

/* explorer */
.explorer { width: 785px; height: 593px; }
.front { z-index: 2; left: 451px; top: 48px; }
.behind { z-index: 1; left: 425px; top: 23px; width: 784px; height: 592px; box-shadow: -1px 0 #59636b, 0 -1px #126eb8; }
.ex-title { display: flex; align-items: center; height: 31px; padding-left: 8px; }
.behind .ex-title { height: 30px; }
.ex-title .bar { width: 1px; height: 12px; margin: 0 9px 0 7px; background: #999; }
.ex-title .q2 { margin-left: 6px; }
.qat { width: 7px; height: 7px; margin: 2px 0 0 7px; }
.qat + .bar { margin-right: 8px; }
.behind .ex-title span, .behind .controls { color: #8b8b8b; }
.controls { display: flex; margin: 0 2px 0 auto; }
.controls button { display: grid; place-items: center; width: 45px; height: 30px; }
.controls svg { width: 12px; height: 12px; }
.ex-tabs { display: flex; height: 24px; border-bottom: 1px solid #dcdde0; color: #333; }
.ex-tabs > button { width: 57px; padding: 0; }
.ex-tabs .file { width: 56px; background: #0063b1; color: #fff; }
.ex-tabs .on { width: 58px; height: 24px; background: #f5f6f7; border: solid #dcdde0; border-width: 1px 1px 0; }
.tab-end { display: flex; align-items: center; gap: 10px; margin-left: auto; padding-right: 4px; color: #8a8a8a; }
.help { width: 16px; height: 16px; border-radius: 50%; background: #0063b1; color: #fff; font-weight: 700; line-height: 14px; }
.ribbon { display: flex; height: 92px; background: #f5f6f7; border-bottom: 1px solid #dadbdc; color: #6c6c6c; font-size: 11px; }
.behind .ribbon { color: #222; }
.group { display: flex; flex-direction: column; align-items: center; justify-content: space-between; margin: 2px 0; border-right: 1px solid #dedfe1; }
.clip { width: 263px; } .org { width: 165px; } .new { width: 83px; } .opn { width: 133px; } .sel { width: 115px; }
.tools { display: flex; align-self: stretch; padding-left: 7px; }
.label { color: #444; line-height: 14px; }
.tool { display: flex; flex-direction: column; align-items: center; line-height: 13px; padding-top: 6px; width: 48px; }
.tool > svg { width: 26px; height: 30px; margin-bottom: 5px; }
.pin-tool { display: block; width: 64px; text-align: center; }
.pin-tool svg { margin: 0 auto 5px; }
.pin-tool .pin { height: 24px; margin: 3px auto 8px; color: #a5b3c9; }
.copy { width: 42px; }
.pin-tool + .copy { margin-left: 1px; }
.tool .tri { width: 6px; height: 6px; margin: 2px 0; }
.tri { width: 6px; height: 6px; margin-left: 4px; color: #aaa; }
.tri.black { color: #222; }
.stack { display: flex; flex-direction: column; padding: 2px 0 0 4px; }
.stack button { display: flex; align-items: center; height: 22px; gap: 3px; }
.stack .tri { margin-left: 1px; }
.stack.loose { padding: 6px 0 0 1px; }
.stack.loose button { height: 29px; gap: 2px; }
.stack.loose .tri { margin-left: 2px; }
.stack.ruled { padding-left: 6px; margin: 0 8px 0 auto; background: linear-gradient(#dedfe1, #dedfe1) left 8px / 1px 52px no-repeat; }
.sel .stack { padding-left: 0; color: #222; }
.new .tools { padding-left: 0; }
.opn .tool { width: 52px; }
.address-row { display: flex; align-items: center; height: 35px; padding: 0 13px; }
.arrow { width: 13px; height: 12px; color: #d0d0d0; }
.arrow.dark { color: #666; }
.arrow.fwd { margin-left: 17px; transform: rotate(180deg); }
.arrow.up { margin-left: 11px; transform: rotate(90deg); }
.address-row > .tri { width: 8px; height: 8px; margin-left: 12px; color: #ccc; }
.address { flex: 1; display: flex; align-items: center; gap: 5px; height: 22px; margin-left: 6px; padding-left: 4px; border: 1px solid #d9d9d9; }
.address span { margin: 0 1px; }
.crumb { width: 8px; height: 8px; color: #555; }
.drop { margin-left: auto; color: #666; }
.refresh { display: grid; place-items: center; align-self: stretch; width: 17px; border-left: 1px solid #d9d9d9; color: #666; margin-left: -3px; }
.refresh svg { width: 10px; height: 10px; }
.find { display: flex; align-items: center; width: 202px; height: 22px; margin-left: 12px; padding: 0 7px 0 8px; border: 1px solid #d9d9d9; color: #555; }
.find input { flex: 1; min-width: 0; }
.find svg { width: 13px; height: 13px; }
input::placeholder { color: #555; opacity: 1; }
.ex-body { flex: 1; display: flex; min-height: 0; }
.tree { list-style: none; margin: 0; padding: 0; width: 139px; }
.tree li { display: flex; align-items: center; height: 24px; gap: 5px; padding-left: 14px; }
.tree .chev { margin-right: 3px; }
.tree .sub { padding-left: 22px; }
.tree .open { color: #444; }
.hot { background: #e5f3ff; }
.vscroll { display: flex; flex-direction: column; align-items: center; justify-content: space-between; width: 17px; padding: 4px 0; background: #f0f0f0; color: #444; }
.track { flex: 1; align-self: stretch; padding-top: 158px; }
.track i { display: block; height: 119px; margin: 0 1px 0 0; background: #cdcdcd; }
.content { flex: 1; padding: 7px 8px 0 10px; }
.content h2 { display: flex; align-items: center; gap: 4px; margin: 0; font-size: 14px; line-height: 24px; font-weight: 400; color: #1e3287; }
.content h2 svg { width: 11px; height: 11px; color: #888; }
.content h2::after { content: ""; flex: 1; height: 1px; margin-left: 3px; background: #e2e2e2; }
.tiles { display: grid; grid-template-columns: 228px 228px; grid-auto-rows: 64px; padding: 12px 0 0 35px; }
.tile-item { display: flex; gap: 2px; }
.tile-item .folder { width: 44px; height: 44px; margin-top: 2px; }
.tile-item b, .tile-item span { display: block; font-weight: 400; }
.tile-item span { color: #777; }
.tack { width: 12px; height: 12px; margin-top: 1px; color: #888; }
.status { display: flex; align-items: center; justify-content: space-between; height: 24px; padding: 0 8px 0 14px; color: #24436c; }
.views { display: flex; gap: 7px; }
.views svg { width: 16px; height: 14px; }

/* overlays */
.build { position: absolute; z-index: 0; right: 5px; bottom: 0; margin: 0; text-align: right; line-height: 17px; font-size: 11px; color: #fff; }
.mark { position: absolute; z-index: 3; right: 42px; bottom: 7px; display: flex; align-items: center; gap: 4px; font: 34px/40px "Roboto", sans-serif; color: rgba(255, 255, 255, .6); text-shadow: 0 0 3px rgba(100, 110, 120, .55); }
.mark svg { width: 60px; height: 64px; }

/* taskbar */
.taskbar { display: flex; height: 40px; background: linear-gradient(90deg, #001822, #00131e 60%, #000c1a); color: #fff; }
.start { display: grid; place-items: center; width: 48px; }
.start svg { width: 16px; height: 16px; }
.task-search { display: flex; align-items: center; gap: 9px; width: 288px; padding-left: 12px; background: #f1f1f1; border: 1px solid #c9c9c9; font-size: 14px; }
.task-search svg { width: 18px; height: 18px; }
.task-search input { flex: 1; min-width: 0; }
.task-search input::placeholder { color: #444; }
.tb { display: grid; place-items: center; width: 48px; margin-right: 1px; border-bottom: 2px solid transparent; }
.tb svg { width: 24px; height: 24px; }
.task-view { margin-right: 3px; }
.task-view svg { width: 18px; height: 18px; }
.tb.active { background: #344650; border-color: #76b9ed; box-shadow: inset -4px 0 #1d3039; }
.tb.running { border-image: linear-gradient(90deg, transparent 8%, #76b9ed 8% 92%, transparent 92%) 2; }
.tray { display: flex; align-items: center; gap: 8px; margin-left: auto; padding-right: 24px; }
.tray > svg { width: 16px; height: 16px; }
.tray time { text-align: center; font-size: 11px; line-height: 18px; margin-left: 3px; }
.tray .note { width: 18px; height: 18px; margin-left: 9px; }
```
